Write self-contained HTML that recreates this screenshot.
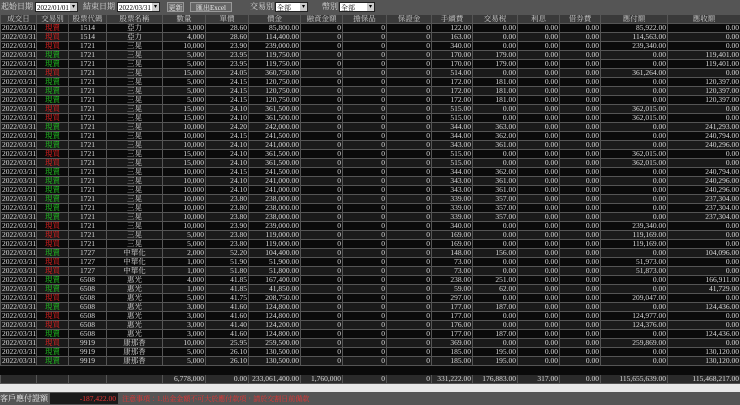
<!DOCTYPE html><html><head><meta charset="utf-8"><style>
body{margin:0;width:740px;height:405px;background:#4e4e4e;overflow:hidden;font-family:"Liberation Serif","Noto Serif CJK TC",serif;color:#ddd}
.top{position:absolute;left:0;top:0;width:740px;height:14px;background:#555;font-size:8px}
.top span,.top div{position:absolute;top:2px;height:10px;line-height:10px}
.sel{background:#fff;color:#000;border:1px solid #222;box-sizing:border-box;font-size:7px;padding-left:1px}
.sel:after{content:"▾";position:absolute;right:0;top:0;width:7px;height:8px;background:#ccc;color:#000;text-align:center;font-size:6px;line-height:8px}
.btn{background:#666;border:1px solid #999;box-sizing:border-box;color:#eee;font-size:7px;text-align:center}
table{position:absolute;left:0;top:14px;border-collapse:collapse;table-layout:fixed;width:740px;font-size:7.5px}
td,th{height:9px;line-height:8px;padding:0 1px;border:1px solid #555;box-sizing:border-box;white-space:nowrap;overflow:hidden;text-align:right}
th{background:#3a3a3a;color:#ccc;font-weight:normal;text-align:center}
tr.a td{background:#0a0a0a}tr.b td{background:#1a1a1a}
td:nth-child(1){text-align:left}td:nth-child(2),td:nth-child(3),td:nth-child(4){text-align:center}
.r{color:#e22}.g{color:#2c2}
tr.t td{background:#2a2a2a}
.wb{position:absolute;left:0;top:384px;width:740px;height:8px;background:#e8e8e8}
.bot{position:absolute;left:0;top:392px;width:740px;height:13px;background:#555;font-size:8px}
</style></head><body>
<div class="top">
<span style="left:1px">起始日期</span><div class="sel" style="left:35px;width:43px">2022/01/01</div>
<span style="left:83px">結束日期</span><div class="sel" style="left:117px;width:43px">2022/03/31</div>
<div class="btn" style="left:167px;width:17px">更新</div><div class="btn" style="left:190px;width:42px">匯出Excel</div>
<span style="left:250px">交易別</span><div class="sel" style="left:275px;width:33px">全部</div>
<span style="left:322px">幣別</span><div class="sel" style="left:339px;width:36px">全部</div>
</div>
<table>
<colgroup><col style="width:36px"><col style="width:32px"><col style="width:38px"><col style="width:56px"><col style="width:43px"><col style="width:43px"><col style="width:52px"><col style="width:42px"><col style="width:44px"><col style="width:45px"><col style="width:41px"><col style="width:45px"><col style="width:42px"><col style="width:41px"><col style="width:67px"><col style="width:73px"></colgroup>
<tr><th>成交日</th><th>交易別</th><th>股票代碼</th><th>股票名稱</th><th>數量</th><th>單價</th><th>價金</th><th>融資金額</th><th>擔保品</th><th>保證金</th><th>手續費</th><th>交易稅</th><th>利息</th><th>借券費</th><th>應付額</th><th>應收額</th></tr>
<tr class="a"><td>2022/03/31</td><td class="r">現賣</td><td>1514</td><td>亞力</td><td>3,000</td><td>28.60</td><td>85,800.00</td><td>0</td><td>0</td><td>0</td><td>122.00</td><td>0.00</td><td>0.00</td><td>0.00</td><td>85,922.00</td><td>0.00</td></tr>
<tr class="b"><td>2022/03/31</td><td class="r">現買</td><td>1514</td><td>亞力</td><td>4,000</td><td>28.60</td><td>114,400.00</td><td>0</td><td>0</td><td>0</td><td>163.00</td><td>0.00</td><td>0.00</td><td>0.00</td><td>114,563.00</td><td>0.00</td></tr>
<tr class="a"><td>2022/03/31</td><td class="r">現買</td><td>1721</td><td>三晃</td><td>10,000</td><td>23.90</td><td>239,000.00</td><td>0</td><td>0</td><td>0</td><td>340.00</td><td>0.00</td><td>0.00</td><td>0.00</td><td>239,340.00</td><td>0.00</td></tr>
<tr class="b"><td>2022/03/31</td><td class="g">現賣</td><td>1721</td><td>三晃</td><td>5,000</td><td>23.95</td><td>119,750.00</td><td>0</td><td>0</td><td>0</td><td>170.00</td><td>179.00</td><td>0.00</td><td>0.00</td><td>0.00</td><td>119,401.00</td></tr>
<tr class="a"><td>2022/03/31</td><td class="g">現賣</td><td>1721</td><td>三晃</td><td>5,000</td><td>23.95</td><td>119,750.00</td><td>0</td><td>0</td><td>0</td><td>170.00</td><td>179.00</td><td>0.00</td><td>0.00</td><td>0.00</td><td>119,401.00</td></tr>
<tr class="b"><td>2022/03/31</td><td class="r">現買</td><td>1721</td><td>三晃</td><td>15,000</td><td>24.05</td><td>360,750.00</td><td>0</td><td>0</td><td>0</td><td>514.00</td><td>0.00</td><td>0.00</td><td>0.00</td><td>361,264.00</td><td>0.00</td></tr>
<tr class="a"><td>2022/03/31</td><td class="g">現賣</td><td>1721</td><td>三晃</td><td>5,000</td><td>24.15</td><td>120,750.00</td><td>0</td><td>0</td><td>0</td><td>172.00</td><td>181.00</td><td>0.00</td><td>0.00</td><td>0.00</td><td>120,397.00</td></tr>
<tr class="b"><td>2022/03/31</td><td class="g">現賣</td><td>1721</td><td>三晃</td><td>5,000</td><td>24.15</td><td>120,750.00</td><td>0</td><td>0</td><td>0</td><td>172.00</td><td>181.00</td><td>0.00</td><td>0.00</td><td>0.00</td><td>120,397.00</td></tr>
<tr class="a"><td>2022/03/31</td><td class="g">現賣</td><td>1721</td><td>三晃</td><td>5,000</td><td>24.15</td><td>120,750.00</td><td>0</td><td>0</td><td>0</td><td>172.00</td><td>181.00</td><td>0.00</td><td>0.00</td><td>0.00</td><td>120,397.00</td></tr>
<tr class="b"><td>2022/03/31</td><td class="r">現買</td><td>1721</td><td>三晃</td><td>15,000</td><td>24.10</td><td>361,500.00</td><td>0</td><td>0</td><td>0</td><td>515.00</td><td>0.00</td><td>0.00</td><td>0.00</td><td>362,015.00</td><td>0.00</td></tr>
<tr class="a"><td>2022/03/31</td><td class="r">現買</td><td>1721</td><td>三晃</td><td>15,000</td><td>24.10</td><td>361,500.00</td><td>0</td><td>0</td><td>0</td><td>515.00</td><td>0.00</td><td>0.00</td><td>0.00</td><td>362,015.00</td><td>0.00</td></tr>
<tr class="b"><td>2022/03/31</td><td class="g">現賣</td><td>1721</td><td>三晃</td><td>10,000</td><td>24.20</td><td>242,000.00</td><td>0</td><td>0</td><td>0</td><td>344.00</td><td>363.00</td><td>0.00</td><td>0.00</td><td>0.00</td><td>241,293.00</td></tr>
<tr class="a"><td>2022/03/31</td><td class="g">現賣</td><td>1721</td><td>三晃</td><td>10,000</td><td>24.15</td><td>241,500.00</td><td>0</td><td>0</td><td>0</td><td>344.00</td><td>362.00</td><td>0.00</td><td>0.00</td><td>0.00</td><td>240,794.00</td></tr>
<tr class="b"><td>2022/03/31</td><td class="g">現賣</td><td>1721</td><td>三晃</td><td>10,000</td><td>24.10</td><td>241,000.00</td><td>0</td><td>0</td><td>0</td><td>343.00</td><td>361.00</td><td>0.00</td><td>0.00</td><td>0.00</td><td>240,296.00</td></tr>
<tr class="a"><td>2022/03/31</td><td class="r">現買</td><td>1721</td><td>三晃</td><td>15,000</td><td>24.10</td><td>361,500.00</td><td>0</td><td>0</td><td>0</td><td>515.00</td><td>0.00</td><td>0.00</td><td>0.00</td><td>362,015.00</td><td>0.00</td></tr>
<tr class="b"><td>2022/03/31</td><td class="r">現買</td><td>1721</td><td>三晃</td><td>15,000</td><td>24.10</td><td>361,500.00</td><td>0</td><td>0</td><td>0</td><td>515.00</td><td>0.00</td><td>0.00</td><td>0.00</td><td>362,015.00</td><td>0.00</td></tr>
<tr class="a"><td>2022/03/31</td><td class="g">現賣</td><td>1721</td><td>三晃</td><td>10,000</td><td>24.15</td><td>241,500.00</td><td>0</td><td>0</td><td>0</td><td>344.00</td><td>362.00</td><td>0.00</td><td>0.00</td><td>0.00</td><td>240,794.00</td></tr>
<tr class="b"><td>2022/03/31</td><td class="g">現賣</td><td>1721</td><td>三晃</td><td>10,000</td><td>24.10</td><td>241,000.00</td><td>0</td><td>0</td><td>0</td><td>343.00</td><td>361.00</td><td>0.00</td><td>0.00</td><td>0.00</td><td>240,296.00</td></tr>
<tr class="a"><td>2022/03/31</td><td class="g">現賣</td><td>1721</td><td>三晃</td><td>10,000</td><td>24.10</td><td>241,000.00</td><td>0</td><td>0</td><td>0</td><td>343.00</td><td>361.00</td><td>0.00</td><td>0.00</td><td>0.00</td><td>240,296.00</td></tr>
<tr class="b"><td>2022/03/31</td><td class="g">現賣</td><td>1721</td><td>三晃</td><td>10,000</td><td>23.80</td><td>238,000.00</td><td>0</td><td>0</td><td>0</td><td>339.00</td><td>357.00</td><td>0.00</td><td>0.00</td><td>0.00</td><td>237,304.00</td></tr>
<tr class="a"><td>2022/03/31</td><td class="g">現賣</td><td>1721</td><td>三晃</td><td>10,000</td><td>23.80</td><td>238,000.00</td><td>0</td><td>0</td><td>0</td><td>339.00</td><td>357.00</td><td>0.00</td><td>0.00</td><td>0.00</td><td>237,304.00</td></tr>
<tr class="b"><td>2022/03/31</td><td class="g">現賣</td><td>1721</td><td>三晃</td><td>10,000</td><td>23.80</td><td>238,000.00</td><td>0</td><td>0</td><td>0</td><td>339.00</td><td>357.00</td><td>0.00</td><td>0.00</td><td>0.00</td><td>237,304.00</td></tr>
<tr class="a"><td>2022/03/31</td><td class="r">現買</td><td>1721</td><td>三晃</td><td>10,000</td><td>23.90</td><td>239,000.00</td><td>0</td><td>0</td><td>0</td><td>340.00</td><td>0.00</td><td>0.00</td><td>0.00</td><td>239,340.00</td><td>0.00</td></tr>
<tr class="b"><td>2022/03/31</td><td class="r">現買</td><td>1721</td><td>三晃</td><td>5,000</td><td>23.80</td><td>119,000.00</td><td>0</td><td>0</td><td>0</td><td>169.00</td><td>0.00</td><td>0.00</td><td>0.00</td><td>119,169.00</td><td>0.00</td></tr>
<tr class="a"><td>2022/03/31</td><td class="r">現買</td><td>1721</td><td>三晃</td><td>5,000</td><td>23.80</td><td>119,000.00</td><td>0</td><td>0</td><td>0</td><td>169.00</td><td>0.00</td><td>0.00</td><td>0.00</td><td>119,169.00</td><td>0.00</td></tr>
<tr class="b"><td>2022/03/31</td><td class="g">現賣</td><td>1727</td><td>中華化</td><td>2,000</td><td>52.20</td><td>104,400.00</td><td>0</td><td>0</td><td>0</td><td>148.00</td><td>156.00</td><td>0.00</td><td>0.00</td><td>0.00</td><td>104,096.00</td></tr>
<tr class="a"><td>2022/03/31</td><td class="r">現買</td><td>1727</td><td>中華化</td><td>1,000</td><td>51.90</td><td>51,900.00</td><td>0</td><td>0</td><td>0</td><td>73.00</td><td>0.00</td><td>0.00</td><td>0.00</td><td>51,973.00</td><td>0.00</td></tr>
<tr class="b"><td>2022/03/31</td><td class="r">現買</td><td>1727</td><td>中華化</td><td>1,000</td><td>51.80</td><td>51,800.00</td><td>0</td><td>0</td><td>0</td><td>73.00</td><td>0.00</td><td>0.00</td><td>0.00</td><td>51,873.00</td><td>0.00</td></tr>
<tr class="a"><td>2022/03/31</td><td class="g">現賣</td><td>6508</td><td>惠光</td><td>4,000</td><td>41.85</td><td>167,400.00</td><td>0</td><td>0</td><td>0</td><td>238.00</td><td>251.00</td><td>0.00</td><td>0.00</td><td>0.00</td><td>166,911.00</td></tr>
<tr class="b"><td>2022/03/31</td><td class="g">現賣</td><td>6508</td><td>惠光</td><td>1,000</td><td>41.85</td><td>41,850.00</td><td>0</td><td>0</td><td>0</td><td>59.00</td><td>62.00</td><td>0.00</td><td>0.00</td><td>0.00</td><td>41,729.00</td></tr>
<tr class="a"><td>2022/03/31</td><td class="r">現買</td><td>6508</td><td>惠光</td><td>5,000</td><td>41.75</td><td>208,750.00</td><td>0</td><td>0</td><td>0</td><td>297.00</td><td>0.00</td><td>0.00</td><td>0.00</td><td>209,047.00</td><td>0.00</td></tr>
<tr class="b"><td>2022/03/31</td><td class="g">現賣</td><td>6508</td><td>惠光</td><td>3,000</td><td>41.60</td><td>124,800.00</td><td>0</td><td>0</td><td>0</td><td>177.00</td><td>187.00</td><td>0.00</td><td>0.00</td><td>0.00</td><td>124,436.00</td></tr>
<tr class="a"><td>2022/03/31</td><td class="r">現買</td><td>6508</td><td>惠光</td><td>3,000</td><td>41.60</td><td>124,800.00</td><td>0</td><td>0</td><td>0</td><td>177.00</td><td>0.00</td><td>0.00</td><td>0.00</td><td>124,977.00</td><td>0.00</td></tr>
<tr class="b"><td>2022/03/31</td><td class="r">現買</td><td>6508</td><td>惠光</td><td>3,000</td><td>41.40</td><td>124,200.00</td><td>0</td><td>0</td><td>0</td><td>176.00</td><td>0.00</td><td>0.00</td><td>0.00</td><td>124,376.00</td><td>0.00</td></tr>
<tr class="a"><td>2022/03/31</td><td class="g">現賣</td><td>6508</td><td>惠光</td><td>3,000</td><td>41.60</td><td>124,800.00</td><td>0</td><td>0</td><td>0</td><td>177.00</td><td>187.00</td><td>0.00</td><td>0.00</td><td>0.00</td><td>124,436.00</td></tr>
<tr class="b"><td>2022/03/31</td><td class="r">現買</td><td>9919</td><td>康那香</td><td>10,000</td><td>25.95</td><td>259,500.00</td><td>0</td><td>0</td><td>0</td><td>369.00</td><td>0.00</td><td>0.00</td><td>0.00</td><td>259,869.00</td><td>0.00</td></tr>
<tr class="a"><td>2022/03/31</td><td class="g">現賣</td><td>9919</td><td>康那香</td><td>5,000</td><td>26.10</td><td>130,500.00</td><td>0</td><td>0</td><td>0</td><td>185.00</td><td>195.00</td><td>0.00</td><td>0.00</td><td>0.00</td><td>130,120.00</td></tr>
<tr class="b"><td>2022/03/31</td><td class="g">現賣</td><td>9919</td><td>康那香</td><td>5,000</td><td>26.10</td><td>130,500.00</td><td>0</td><td>0</td><td>0</td><td>185.00</td><td>195.00</td><td>0.00</td><td>0.00</td><td>0.00</td><td>130,120.00</td></tr>
<tr class="a"><td style="border-color:#0a0a0a" colspan="16"></td></tr>
<tr class="t"><td></td><td></td><td></td><td></td><td>6,778,000</td><td>0.00</td><td>233,061,400.00</td><td>1,760,000</td><td>0</td><td>0</td><td>331,222.00</td><td>176,883.00</td><td>317.00</td><td>0.00</td><td>115,655,639.00</td><td>115,468,217.00</td></tr>
</table>
<div class="wb"></div>
<div class="bot">
<span style="position:absolute;left:0;top:2px;line-height:10px;color:#eee">客戶應付證額</span>
<div style="position:absolute;left:50px;top:1px;width:68px;height:11px;background:#1a1a1a;color:#e33;text-align:right;font-size:7.5px;line-height:11px;padding-right:2px;box-sizing:border-box">-187,422.00</div>
<span style="position:absolute;left:122px;top:2px;line-height:10px;color:#e33;font-size:7px">注意事項：1.出金金額不可大於應付款項，請於交割日前備款</span>
</div>
</body></html>
